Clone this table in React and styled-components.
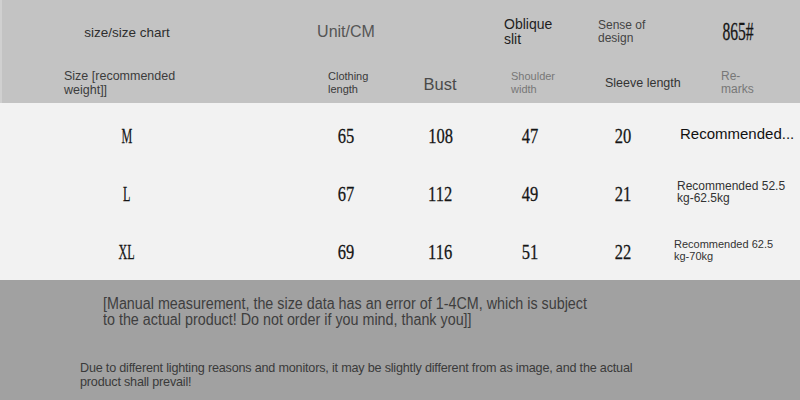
import React from "react";
import styled, { createGlobalStyle } from "styled-components";

const GlobalStyle = createGlobalStyle`
  html, body {
    margin: 0;
    padding: 0;
  }
  body {
    font-family: "Liberation Sans", Arial, sans-serif;
    background: #a2a2a2;
  }
`;

const rows = [
  {
    size: "M",
    clothing: "65",
    bust: "108",
    shoulder: "47",
    sleeve: "20",
    remark: "Recommended...",
    remarkSize: 15,
  },
  {
    size: "L",
    clothing: "67",
    bust: "112",
    shoulder: "49",
    sleeve: "21",
    remark: ["Recommended 52.5", "kg-62.5kg"],
    remarkSize: 12,
    remarkPad: 7,
  },
  {
    size: "XL",
    clothing: "69",
    bust: "116",
    shoulder: "51",
    sleeve: "22",
    remark: ["Recommended 62.5", "kg-70kg"],
    remarkSize: 11,
    remarkPad: 4,
  },
];

const App = () => {
  return (
    <Page>
      <GlobalStyle />
      <HeaderBand>
        <Row $h={58} $pt={6}>
          <Cell $size={13.5} $color="#2e2e2e">
            size/size chart
          </Cell>
          <Cell $size={16} $color="#555">
            Unit/CM
          </Cell>
          <Cell />
          <Cell $align="left" $pl={16} $size={14} $lh={15} $color="#1e1e1e">
            Oblique
            <br />
            slit
          </Cell>
          <Cell $align="left" $pl={22} $size={12} $lh={13} $color="#444">
            Sense of
            <br />
            design
          </Cell>
          <Cell $pl={5}>
            <Squeeze $size={26} $scale={0.6}>
              865#
            </Squeeze>
          </Cell>
        </Row>
        <Row $h={45} $pt={4}>
          <Cell $align="left" $pl={64} $size={12.5} $lh={14} $color="#3c3c3c">
            Size [recommended
            <br />
            weight]]
          </Cell>
          <Cell $align="left" $pl={28} $size={11} $lh={13} $color="#3a3a3a">
            Clothing
            <br />
            length
          </Cell>
          <Cell $size={16.5} $color="#4a4a4a" $pt={4}>
            Bust
          </Cell>
          <Cell $align="left" $pl={23} $size={11} $lh={13} $color="#777">
            Shoulder
            <br />
            width
          </Cell>
          <Cell $align="left" $pl={29} $size={12.5} $color="#333">
            Sleeve length
          </Cell>
          <Cell $align="left" $pl={51} $size={12} $lh={13} $color="#777">
            Re-
            <br />
            marks
          </Cell>
        </Row>
      </HeaderBand>

      <TableBand>
        {rows.map((row) => (
          <Row key={row.size} $h={58}>
            <Cell>
              <Squeeze $size={22} $scale={0.55}>
                {row.size}
              </Squeeze>
            </Cell>
            <Cell>
              <Squeeze $size={22} $scale={0.75}>
                {row.clothing}
              </Squeeze>
            </Cell>
            <Cell>
              <Squeeze $size={22} $scale={0.75}>
                {row.bust}
              </Squeeze>
            </Cell>
            <Cell $pr={4}>
              <Squeeze $size={22} $scale={0.75}>
                {row.shoulder}
              </Squeeze>
            </Cell>
            <Cell>
              <Squeeze $size={22} $scale={0.75}>
                {row.sleeve}
              </Squeeze>
            </Cell>
            {Array.isArray(row.remark) ? (
              <Cell
                $align="left"
                $pl={row.remarkPad}
                $size={row.remarkSize}
                $lh={12.5}
                $color="#333"
                $pb={4}
              >
                {row.remark[0]}
                <br />
                {row.remark[1]}
              </Cell>
            ) : (
              <Cell
                $align="left"
                $pl={10}
                $size={row.remarkSize}
                $color="#111"
                $pb={6}
              >
                {row.remark}
              </Cell>
            )}
          </Row>
        ))}
      </TableBand>

      <NoteBand>
        <Note>
          [Manual measurement, the size data has an error of 1-4CM, which is
          subject
          <br />
          to the actual product! Do not order if you mind, thank you]]
        </Note>
        <Disclaimer>
          Due to different lighting reasons and monitors, it may be slightly
          different from as image, and the actual
          <br />
          product shall prevail!
        </Disclaimer>
      </NoteBand>
    </Page>
  );
};

const Page = styled.div`
  width: 800px;
  height: 400px;
  display: flex;
  flex-direction: column;
  overflow: hidden;
`;

const HeaderBand = styled.div`
  height: 103px;
  background-color: #c3c3c3;
  box-shadow: inset 2px 0 0 #d0d0d0;
`;

const TableBand = styled.div`
  height: 177px;
  padding-top: 4px;
  box-sizing: border-box;
  background-color: #f2f2f2;
`;

const NoteBand = styled.div`
  flex: 1;
  background-color: #a1a1a1;
  display: flex;
  flex-direction: column;
  padding-top: 16px;
`;

const Row = styled.div`
  display: grid;
  grid-template-columns: 300px 92px 96px 88px 94px 1fr;
  height: ${(p) => p.$h}px;
  padding-top: ${(p) => p.$pt || 0}px;
  box-sizing: border-box;

  & > :first-child {
    padding-right: 46px;
  }
`;

const Cell = styled.div`
  display: flex;
  flex-direction: column;
  justify-content: center;
  align-items: ${(p) => (p.$align === "left" ? "flex-start" : "center")};
  text-align: ${(p) => p.$align || "center"};
  padding-left: ${(p) => p.$pl || 0}px;
  padding-top: ${(p) => p.$pt || 0}px;
  padding-bottom: ${(p) => p.$pb || 0}px;
  margin-right: ${(p) => p.$pr || 0}px;
  font-size: ${(p) => p.$size || 13}px;
  line-height: ${(p) => (p.$lh ? `${p.$lh}px` : "normal")};
  color: ${(p) => p.$color || "#222"};
  white-space: nowrap;
`;

const Squeeze = styled.span`
  display: inline-block;
  font-family: "Liberation Serif", "Times New Roman", serif;
  font-size: ${(p) => p.$size}px;
  line-height: 1;
  color: #151515;
  transform: scaleX(${(p) => p.$scale});
  -webkit-text-stroke: 0.3px #151515;
`;

const Note = styled.p`
  margin: 0 0 0 103px;
  font-size: 16px;
  line-height: 16px;
  color: #3e3e3e;
  white-space: nowrap;
  transform: scaleX(0.895);
  transform-origin: left center;
`;

const Disclaimer = styled.p`
  margin: 33px 0 0 80px;
  font-size: 13px;
  line-height: 14px;
  letter-spacing: -0.2px;
  color: #3a3a3a;
  white-space: nowrap;
  transform: scaleX(0.97);
  transform-origin: left center;
`;

export default App;
